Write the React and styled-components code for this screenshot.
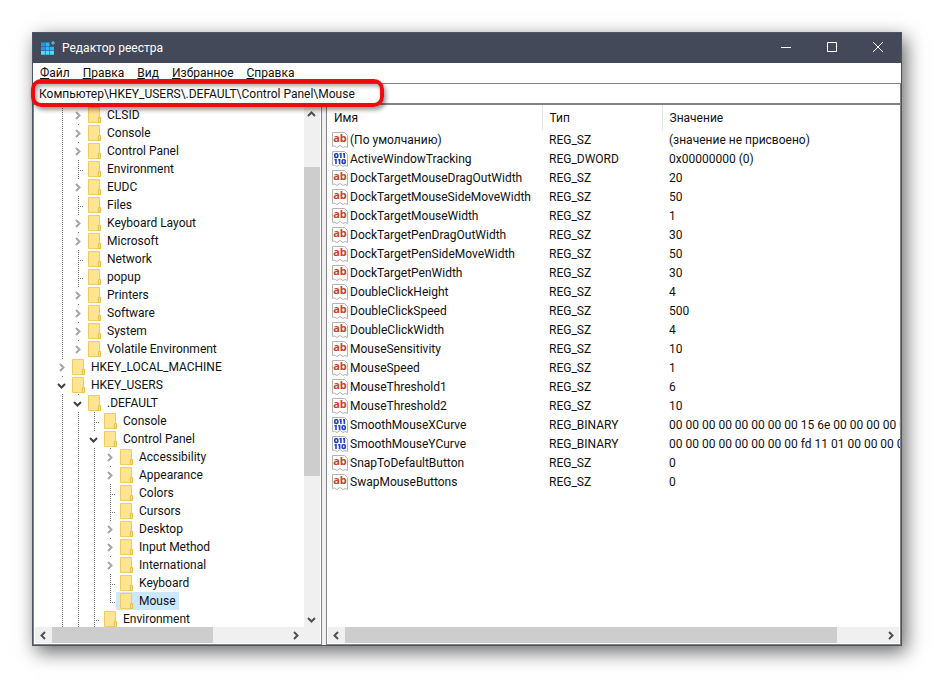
// App.jsx
import React, { useState } from "react";
import styled, { createGlobalStyle, css } from "styled-components";

const menuItems = ["Файл", "Правка", "Вид", "Избранное", "Справка"];

// level: depth in the tree, state: "closed" | "open" | "leaf"
const keys = [
  { name: "CLSID", level: 1, state: "closed" },
  { name: "Console", level: 1, state: "closed" },
  { name: "Control Panel", level: 1, state: "closed" },
  { name: "Environment", level: 1, state: "leaf" },
  { name: "EUDC", level: 1, state: "closed" },
  { name: "Files", level: 1, state: "leaf" },
  { name: "Keyboard Layout", level: 1, state: "closed" },
  { name: "Microsoft", level: 1, state: "closed" },
  { name: "Network", level: 1, state: "leaf" },
  { name: "popup", level: 1, state: "leaf" },
  { name: "Printers", level: 1, state: "closed" },
  { name: "Software", level: 1, state: "closed" },
  { name: "System", level: 1, state: "closed" },
  { name: "Volatile Environment", level: 1, state: "closed", last: true },
  { name: "HKEY_LOCAL_MACHINE", level: 0, state: "closed" },
  { name: "HKEY_USERS", level: 0, state: "open" },
  { name: ".DEFAULT", level: 1, state: "open" },
  { name: "Console", level: 2, state: "leaf" },
  { name: "Control Panel", level: 2, state: "open" },
  { name: "Accessibility", level: 3, state: "closed" },
  { name: "Appearance", level: 3, state: "closed" },
  { name: "Colors", level: 3, state: "leaf" },
  { name: "Cursors", level: 3, state: "leaf" },
  { name: "Desktop", level: 3, state: "closed" },
  { name: "Input Method", level: 3, state: "closed" },
  { name: "International", level: 3, state: "closed" },
  { name: "Keyboard", level: 3, state: "leaf" },
  { name: "Mouse", level: 3, state: "leaf", last: true },
  { name: "Environment", level: 2, state: "leaf" },
];

const values = [
  ["(По умолчанию)", "REG_SZ", "(значение не присвоено)"],
  ["ActiveWindowTracking", "REG_DWORD", "0x00000000 (0)"],
  ["DockTargetMouseDragOutWidth", "REG_SZ", "20"],
  ["DockTargetMouseSideMoveWidth", "REG_SZ", "50"],
  ["DockTargetMouseWidth", "REG_SZ", "1"],
  ["DockTargetPenDragOutWidth", "REG_SZ", "30"],
  ["DockTargetPenSideMoveWidth", "REG_SZ", "50"],
  ["DockTargetPenWidth", "REG_SZ", "30"],
  ["DoubleClickHeight", "REG_SZ", "4"],
  ["DoubleClickSpeed", "REG_SZ", "500"],
  ["DoubleClickWidth", "REG_SZ", "4"],
  ["MouseSensitivity", "REG_SZ", "10"],
  ["MouseSpeed", "REG_SZ", "1"],
  ["MouseThreshold1", "REG_SZ", "6"],
  ["MouseThreshold2", "REG_SZ", "10"],
  ["SmoothMouseXCurve", "REG_BINARY", "00 00 00 00 00 00 00 00 15 6e 00 00 00 00 00 00"],
  ["SmoothMouseYCurve", "REG_BINARY", "00 00 00 00 00 00 00 00 fd 11 01 00 00 00 00 00"],
  ["SnapToDefaultButton", "REG_SZ", "0"],
  ["SwapMouseButtons", "REG_SZ", "0"],
];

const arrows = {
  up: "M1 6 L4.5 2.5 L8 6",
  down: "M1 3 L4.5 6.5 L8 3",
  left: "M6 1 L2.5 4.5 L6 8",
  right: "M3 1 L6.5 4.5 L3 8",
};

function Arrow({ dir, color = "#505050" }) {
  return (
    <svg width="9" height="9" viewBox="0 0 9 9" fill="none" stroke={color} strokeWidth="2">
      <path d={arrows[dir]} />
    </svg>
  );
}

function AppIcon() {
  return (
    <svg width="16" height="16" viewBox="0 0 16 16">
      <path fill="#1c9be0" d="M1 2.500h4v3.700H1z M1 6.800h4v3.700H1z" />
      <path fill="#2bb8f2" d="M5.500 2.500h4v3.700h-4z M5.500 6.800h4v3.700h-4z M10 6.800h4v3.700h-4z" />
      <path fill="#55d4ff" d="M1 11.100h4v3.700H1z M5.500 11.100h4v3.700h-4z M10 11.100h4v3.700h-4z" />
      <path fill="#55d4ff" d="M12.500 1h1v1.500H15v1h-1.500V5h-1V3.500H11v-1h1.500z" />
    </svg>
  );
}

function FolderIcon() {
  return (
    <svg width="13" height="16" viewBox="0 0 13 16">
      <path fill="#ffe591" stroke="#efcb63" d="M.5 .5h11v15H.5z" />
      <path fill="#ffe591" stroke="#ebbf45" d="M10.500 10.500h2v5h-2z" />
    </svg>
  );
}

function ValueIcon({ binary }) {
  return (
    <svg width="16" height="16" viewBox="0 0 16 16" overflow="visible">
      <path
        fill="#fff"
        stroke="#b4b4b4"
        d="M.5 .5h12l3 3v12l-2.500-1-2 1-3-2-3 2-2.500-1.500-2 .5z"
      />
      {binary ? (
        <g fill="none" stroke="#2340c4" strokeWidth="1.600">
          <rect x="2.800" y="2.800" width="3" height="3.600" rx="1" />
          <rect x="10.200" y="8.800" width="3" height="3.600" rx="1" />
          <path d="M8.900 2v5 M12.300 2v5 M7.500 2.700h1.400 M11 2.700h1.300 M4 8v5 M7.600 8v5 M2.500 8.700H4 M6.200 8.700h1.400" />
        </g>
      ) : (
        <text x="8" y="10" textAnchor="middle" fontFamily="Open Sans, sans-serif" fontSize="11" fontWeight="700" fill="#c2452d">
          ab
        </text>
      )}
    </svg>
  );
}

function ScrollBar({ vertical, before, thumb, after }) {
  return (
    <Bar $vertical={vertical}>
      <BarButton type="button" aria-label={vertical ? "Вверх" : "Влево"}>
        <Arrow dir={vertical ? "up" : "left"} />
      </BarButton>
      <BarSpace $size={before} />
      <BarThumb $size={thumb} />
      <BarSpace $size={after} />
      <BarButton type="button" aria-label={vertical ? "Вниз" : "Вправо"}>
        <Arrow dir={vertical ? "down" : "right"} />
      </BarButton>
    </Bar>
  );
}

function TreeRow({ item, selected, onSelect }) {
  const guides = Array.from({ length: item.level });
  return (
    <Row role="treeitem" aria-selected={selected}>
      {guides.map((_, i) => (
        <Guide key={i} />
      ))}
      {item.state === "leaf" ? (
        <Branch $last={item.last} />
      ) : (
        <Expander type="button" aria-label={item.name}>
          <Arrow
            dir={item.state === "open" ? "down" : "right"}
            color={item.state === "open" ? "#404040" : "#a6a6a6"}
          />
        </Expander>
      )}
      <KeyName type="button" $selected={selected} onClick={onSelect}>
        <FolderIcon />
        {item.name}
      </KeyName>
    </Row>
  );
}

export default function App() {
  const [selected, setSelected] = useState(27);
  const [path, setPath] = useState("Компьютер\\HKEY_USERS\\.DEFAULT\\Control Panel\\Mouse");

  return (
    <>
      <GlobalStyle />
      <Window>
        <TitleBar>
          <AppIcon />
          <Title>Редактор реестра</Title>
          <WindowButton type="button" aria-label="Свернуть">
            <svg width="12" height="12" viewBox="0 0 12 12" stroke="#fff">
              <path d="M1 5.500h10" />
            </svg>
          </WindowButton>
          <WindowButton type="button" aria-label="Развернуть">
            <svg width="12" height="12" viewBox="0 0 12 12" stroke="#fff" fill="none">
              <path d="M1.500 .5h9v9h-9z" />
            </svg>
          </WindowButton>
          <WindowButton type="button" aria-label="Закрыть">
            <svg width="12" height="12" viewBox="0 0 12 12" stroke="#fff">
              <path d="M1 0l10 10M11 0L1 10" />
            </svg>
          </WindowButton>
        </TitleBar>
        <Menu>
          {menuItems.map((item) => (
            <MenuItem key={item} type="button">
              <u>{item[0]}</u>
              {item.slice(1)}
            </MenuItem>
          ))}
        </Menu>
        <Address>
          <AddressInput
            aria-label="Адрес"
            value={path}
            onChange={(e) => setPath(e.target.value)}
          />
          <Highlight />
        </Address>
        <Panes>
          <TreePane>
            <TreeBody>
              <Tree role="tree">
                {keys.map((item, i) => (
                  <TreeRow
                    key={i}
                    item={item}
                    selected={i === selected}
                    onSelect={() => setSelected(i)}
                  />
                ))}
              </Tree>
              <ScrollBar vertical before={45} thumb={309} after={134} />
            </TreeBody>
            <BottomBar>
              <ScrollBar before={0} thumb={162} after={74} />
              <Corner />
            </BottomBar>
          </TreePane>
          <ListPane>
            <ListBody>
              <Table>
                <colgroup>
                  <Col $width="215px" />
                  <Col $width="120px" />
                  <Col />
                </colgroup>
                <thead>
                  <tr>
                    <HeadCell>Имя</HeadCell>
                    <HeadCell>Тип</HeadCell>
                    <HeadCell>Значение</HeadCell>
                  </tr>
                </thead>
                <tbody>
                  {values.map(([name, type, data]) => (
                    <tr key={name}>
                      <Cell $first>
                        <ValueName>
                          <ValueIcon binary={type !== "REG_SZ"} />
                          {name}
                        </ValueName>
                      </Cell>
                      <Cell>{type}</Cell>
                      <Cell>{data}</Cell>
                    </tr>
                  ))}
                </tbody>
              </Table>
            </ListBody>
            <BottomBar>
              <ScrollBar before={0} thumb={492} after={45} />
            </BottomBar>
          </ListPane>
        </Panes>
      </Window>
    </>
  );
}

const GlobalStyle = createGlobalStyle`
  * {
    box-sizing: border-box;
  }

  body {
    margin: 0;
    background: #fff;
  }

  body, button, input {
    font-family: Roboto, "Open Sans", sans-serif;
    font-size: 12px;
    color: #111;
  }

  button {
    padding: 0;
    border: 0;
    background: none;
  }

  svg {
    display: block;
    flex: none;
  }
`;

const Window = styled.div`
  margin: 32px;
  border: 1px solid #4c5362;
  background: #fff;
  box-shadow: 4px 6px 18px rgba(0, 0, 0, 0.6);
`;

const TitleBar = styled.header`
  display: flex;
  align-items: center;
  height: 30px;
  padding-left: 7px;
  background: #434958;
`;

const Title = styled.h1`
  flex: 1;
  margin: 0 0 0 6px;
  font-size: 12px;
  font-weight: 400;
  color: #fff;
`;

const WindowButton = styled.button`
  display: flex;
  align-items: center;
  justify-content: center;
  width: 46px;
  height: 30px;
`;

const Menu = styled.nav`
  display: flex;
  gap: 13px;
  height: 20px;
  padding-left: 7px;
`;

const MenuItem = styled.button`
  line-height: 20px;
`;

const Address = styled.div`
  position: relative;
  height: 21px;
  border: 1px solid #828282;
`;

const AddressInput = styled.input`
  display: block;
  width: 100%;
  height: 19px;
  padding: 0 5px;
  border: 0;
  outline: none;
`;

/* red frame that marks the path */
const Highlight = styled.div`
  position: absolute;
  top: -5px;
  left: -3px;
  width: 353px;
  height: 28px;
  border: 4px solid #ee0b0b;
  border-radius: 10px;
  box-shadow: 2px 3px 4px rgba(0, 0, 0, 0.4), inset 2px 3px 4px rgba(0, 0, 0, 0.35);
  pointer-events: none;
`;

const Panes = styled.main`
  display: flex;
  gap: 4px;
  background: #f0f0f0;
`;

const pane = css`
  display: flex;
  flex-direction: column;
  border: 1px solid #828282;
  background: #fff;
`;

const TreePane = styled.section`
  ${pane}
  flex: 0 0 289px;
`;

const ListPane = styled.section`
  ${pane}
  flex: 1;
  min-width: 0;
`;

const TreeBody = styled.div`
  display: flex;
  padding-right: 1px;
  overflow: hidden;
`;

/* scrolled so that the last row is cut by a pixel */
const Tree = styled.ul`
  flex: 1;
  min-width: 0;
  margin: 0 0 -1px;
  padding: 1px 0 0 20px;
  list-style: none;
`;

const Row = styled.li`
  display: flex;
  height: 18px;
`;

const dots = "#707070 0 1px, transparent 1px 2px";

const Guide = styled.span`
  width: 16px;
  background: repeating-linear-gradient(to bottom, ${dots}) 8px 0 / 1px 100% no-repeat;
`;

const Branch = styled.span`
  width: 14px;
  background:
    repeating-linear-gradient(to bottom, ${dots}) 8px 0 / 1px ${(p) => (p.$last ? "10px" : "100%")} no-repeat,
    repeating-linear-gradient(to right, ${dots}) 8px 10px / 6px 1px no-repeat;
`;

const Expander = styled.button`
  display: flex;
  align-items: center;
  width: 14px;
  padding: 1px 0 0 3px;
  background: repeating-linear-gradient(to bottom, ${dots}) 8px 0 / 1px 2px no-repeat;
`;

const KeyName = styled.button`
  display: flex;
  align-items: center;
  gap: 6px;
  padding: 0 3px 0 4px;
  line-height: 18px;
  white-space: nowrap;
  background: ${(p) => (p.$selected ? "#cce8ff" : "none")};
`;

const BarButton = styled.button`
  display: flex;
  align-items: center;
  justify-content: center;
  flex: 0 0 17px;
`;

const Bar = styled.div`
  display: flex;
  flex-direction: ${(p) => (p.$vertical ? "column" : "row")};
  flex: ${(p) => (p.$vertical ? "0 0 16px" : "1")};
  background: #f0f0f0;

  ${BarButton} {
    padding: ${(p) => (p.$vertical ? "2px 2px 0 0" : "0")};
  }
`;

const BarSpace = styled.span`
  flex: ${(p) => p.$size} 0 0;
`;

const BarThumb = styled.span`
  flex: ${(p) => p.$size} 0 0;
  background: #cdcdcd;
`;

const BottomBar = styled.div`
  display: flex;
  height: 16px;
  margin-bottom: 1px;
  padding: 0 1px;
`;

const Corner = styled.span`
  flex: 0 0 16px;
  background: #f0f0f0;
`;

const ListBody = styled.div`
  flex: 1;
  overflow: hidden;
`;

const Table = styled.table`
  width: 100%;
  table-layout: fixed;
  border-collapse: collapse;
`;

const Col = styled.col`
  width: ${(p) => p.$width || "auto"};
`;

const HeadCell = styled.th`
  height: 25px;
  padding: 0 0 0 7px;
  border-right: 1px solid #e5e5e5;
  font-weight: 400;
  text-align: left;

  &:last-child {
    border-right: 0;
  }
`;

const Cell = styled.td`
  height: 19px;
  padding: 0 0 0 ${(p) => (p.$first ? "5px" : "7px")};
  line-height: 18px;
  white-space: nowrap;
  overflow: hidden;
`;

const ValueName = styled.div`
  display: flex;
  align-items: center;
  gap: 2px;
`;
